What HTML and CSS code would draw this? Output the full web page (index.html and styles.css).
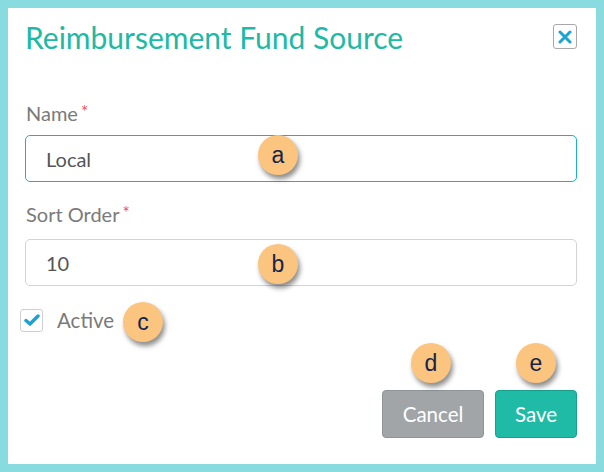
FILE: index.html
```html
<!DOCTYPE html>
<html>
<head>
<meta charset="utf-8">
<link rel="stylesheet" href="styles.css">
</head>
<body>
<div class="card">
  <div class="header">
    <h1 class="title">Reimbursement Fund Source</h1>
    <button class="close" aria-label="Close">
      <svg width="14" height="14" viewBox="0 0 14 14"><path d="M2 2L12 12M12 2L2 12" stroke="#1aa3d4" stroke-width="3" stroke-linecap="round"/></svg>
    </button>
  </div>
  <div class="field field-name">
    <label class="label">Name<span class="req">*</span></label>
    <div class="input focused">Local</div>
  </div>
  <div class="field field-sort">
    <label class="label">Sort Order<span class="req">*</span></label>
    <div class="input">10</div>
  </div>
  <div class="check-row">
    <span class="checkbox">
      <svg width="16" height="14" viewBox="0 0 16 14"><path d="M2 7.5L6 11L14 3" stroke="#1ba1d3" stroke-width="3.4" fill="none" stroke-linecap="round" stroke-linejoin="round"/></svg>
    </span>
    <span class="check-label">Active</span>
  </div>
  <div class="actions">
    <button class="btn btn-cancel">Cancel</button>
    <button class="btn btn-save">Save</button>
  </div>
</div>
<div class="marker m-a">a</div>
<div class="marker m-b">b</div>
<div class="marker m-c">c</div>
<div class="marker m-d">d</div>
<div class="marker m-e">e</div>
</body>
</html>
```

FILE: styles.css
```css
html, body {
  margin: 0;
  padding: 0;
}
body {
  background: #88dcdf;
  width: 604px;
  height: 472px;
  position: relative;
  overflow: hidden;
  font-family: Lato, "Open Sans", sans-serif;
}
.card {
  margin: 8px;
  width: 588px;
  height: 456px;
  background: #fff;
  box-sizing: border-box;
  padding: 12px 19px 0 17px;
}
.header {
  display: flex;
  justify-content: space-between;
  align-items: flex-start;
}
.title {
  margin: 0;
  font-size: 30px;
  line-height: 34px;
  font-weight: 400;
  color: #20b9a5;
}
.close {
  margin-top: 4px;
  width: 24px;
  height: 25px;
  padding: 0;
  border: 1px solid #a9a9a9;
  border-radius: 3px;
  background: #fff;
  display: flex;
  align-items: center;
  justify-content: center;
}
.close svg { display: block; }
.field { display: flex; flex-direction: column; }
.field-name { margin-top: 47px; }
.field-sort { margin-top: 20px; }
.label {
  font-size: 20px;
  line-height: 24px;
  color: #7a7a7a;
  margin-left: 1px;
}
.req {
  color: #e5545c;
  font-size: 17px;
  line-height: 1;
  vertical-align: 3px;
  margin-left: 3px;
}
.field-name .input { margin-top: 10px; }
.field-sort .input { margin-top: 13px; }
.input {
  height: 47px;
  box-sizing: border-box;
  border: 1px solid #d3d3d3;
  border-radius: 5px;
  padding-left: 20px;
  display: flex;
  align-items: center;
  font-size: 20px;
  color: #555;
}
.input.focused { border-color: #1ab0cc; }
.check-row {
  display: flex;
  align-items: center;
  margin-top: 22px;
  margin-left: -5px;
  gap: 14px;
}
.checkbox {
  width: 23px;
  height: 23px;
  box-sizing: border-box;
  border: 1px solid #cfcfcf;
  border-radius: 3px;
  display: flex;
  align-items: center;
  justify-content: center;
}
.checkbox svg { display: block; }
.check-label {
  font-size: 20.5px;
  line-height: 24px;
  color: #7a7a7a;
}
.actions {
  display: flex;
  justify-content: flex-end;
  gap: 11px;
  margin-top: 58px;
}
.btn {
  height: 48px;
  box-sizing: border-box;
  border-radius: 4px;
  font-family: Lato, "Open Sans", sans-serif;
  font-size: 20.5px;
  color: #fff;
  padding: 0;
}
.btn-cancel {
  width: 102px;
  background: #a1a5a8;
  border: 1px solid #8f9497;
}
.btn-save {
  width: 82px;
  background: #1fbba6;
  border: 1px solid #19a08d;
}
.marker {
  position: absolute;
  width: 40px;
  height: 40px;
  border-radius: 50%;
  background: #fbc47f;
  box-shadow: 2px 4px 5px rgba(0,0,0,0.45);
  display: flex;
  align-items: center;
  justify-content: center;
  font-family: "Liberation Sans", Arial, sans-serif;
  font-size: 23px;
  color: #15244a;
}
.m-a { left: 258px; top: 135px; }
.m-b { left: 258px; top: 244px; }
.m-c { left: 123px; top: 302px; }
.m-d { left: 411px; top: 343px; }
.m-e { left: 516px; top: 343px; }
```
